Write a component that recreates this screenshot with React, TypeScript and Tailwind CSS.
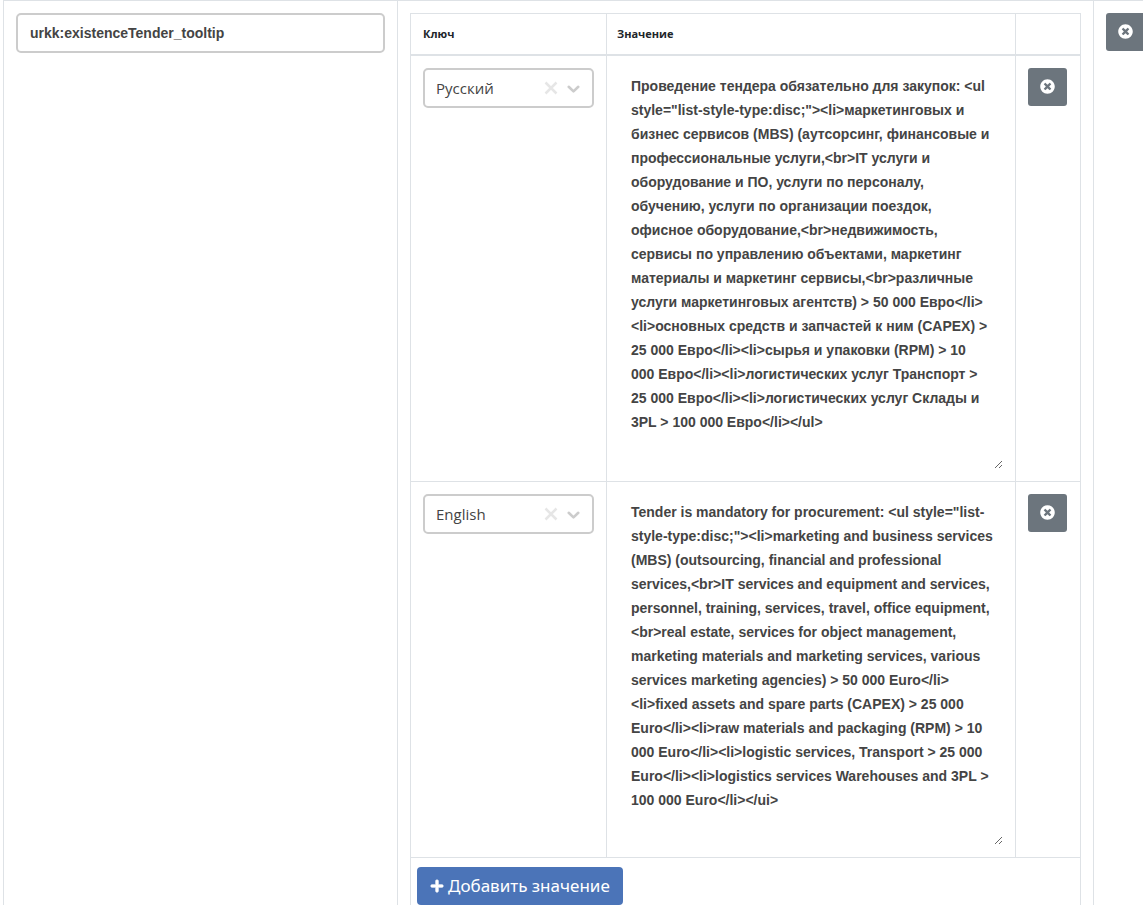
import { useState } from 'react';
import { FaPlus, FaTimesCircle } from 'react-icons/fa';

type Translation = { id: string; lang: string; text: string; size: string };

const translations: Translation[] = [
  {
    id: 'ru',
    lang: 'Русский',
    size: 'h-[401px]',
    text: 'Проведение тендера обязательно для закупок: <ul style="list-style-type:disc;"><li>маркетинговых и бизнес сервисов (MBS) (аутсорсинг, финансовые и профессиональные услуги,<br>IT услуги и оборудование и ПО, услуги по персоналу, обучению, услуги по организации поездок, офисное оборудование,<br>недвижимость, сервисы по управлению объектами, маркетинг материалы и маркетинг сервисы,<br>различные услуги маркетинговых агентств) > 50 000 Евро</li><li>основных средств и запчастей к ним (CAPEX) > 25 000 Евро</li><li>сырья и упаковки (RPM) > 10 000 Евро</li><li>логистических услуг Транспорт > 25 000 Евро</li><li>логистических услуг Склады и 3PL > 100 000 Евро</li></ul>',
  },
  {
    id: 'en',
    lang: 'English',
    size: 'h-[351px]',
    text: 'Tender is mandatory for procurement: <ul style="list-style-type:disc;"><li>marketing and business services (MBS) (outsourcing, financial and professional services,<br>IT services and equipment and services, personnel, training, services, travel, office equipment,<br>real estate, services for object management, marketing materials and marketing services, various services marketing agencies) > 50 000 Euro</li><li>fixed assets and spare parts (CAPEX) > 25 000 Euro</li><li>raw materials and packaging (RPM) > 10 000 Euro</li><li>logistic services, Transport > 25 000 Euro</li><li>logistics services Warehouses and 3PL > 100 000 Euro</li></ui>',
  },
];

function RemoveButton({ label }: { label: string }) {
  return (
    <button
      type="button"
      aria-label={label}
      className="flex h-[38px] w-[39px] items-center justify-center rounded-[3px] bg-[#6c757d] pb-[2px] text-white"
    >
      <FaTimesCircle size={15} />
    </button>
  );
}

function LanguageSelect({ id, initial }: { id: string; initial: string }) {
  const [value, setValue] = useState(initial);
  return (
    <div className="relative h-10">
      <select
        id={id}
        aria-label="Ключ"
        value={value}
        onChange={(e) => setValue(e.target.value)}
        className="h-full w-full appearance-none rounded-[5px] border-2 border-[#cccccc] bg-white pr-14 pl-[11px] text-[15px] text-[#444444]"
      >
        <option value="" />
        <option>Русский</option>
        <option>English</option>
      </select>
      <button
        type="button"
        aria-label="Очистить"
        onClick={() => setValue('')}
        className="absolute top-3 right-[35px] h-4 w-4 text-[#e6e6e6]"
      >
        <svg viewBox="0 0 16 16" className="h-4 w-4" fill="none" stroke="currentColor" strokeWidth="2.5">
          <path d="M2.5 2.5l11 11M13.5 2.5l-11 11" />
        </svg>
      </button>
      <svg
        viewBox="0 0 16 16"
        className="pointer-events-none absolute top-3 right-3 h-4 w-4 text-[#cccccc]"
        fill="none"
        stroke="currentColor"
        strokeWidth="2.6"
        strokeLinecap="round"
        strokeLinejoin="round"
      >
        <path d="M2.7 6.8l4.8 4.6L12.3 6.8" />
      </svg>
    </div>
  );
}

function ValuesTable() {
  return (
    <table className="w-full table-fixed border-separate border-spacing-0 border-t border-r border-[#dee2e6]">
      <colgroup>
        <col className="w-[196px]" />
        <col />
        <col className="w-[65px]" />
      </colgroup>
      <thead>
        <tr className="text-left text-[11px] leading-4 text-[#212529]">
          <th className="h-[42px] border-b-2 border-l border-[#dee2e6] px-3 font-bold">Ключ</th>
          <th className="border-b-2 border-l border-[#dee2e6] px-[10px] font-bold">Значение</th>
          <th className="border-b-2 border-l border-[#dee2e6]" aria-label="Действия" />
        </tr>
      </thead>
      <tbody>
        {translations.map((t) => (
          <tr key={t.id} className="align-top">
            <td className="border-b border-l border-[#dee2e6] p-3">
              <LanguageSelect id={`lang-${t.id}`} initial={t.lang} />
            </td>
            <td className="border-b border-l border-[#dee2e6] p-3">
              <textarea
                aria-label="Значение"
                defaultValue={t.text}
                spellCheck={false}
                className={`block w-full resize overflow-hidden bg-white py-[6px] pr-[10px] pl-3 font-['Liberation_Sans',Arial,sans-serif] text-sm leading-6 font-bold text-[#444444] ${t.size}`}
              />
            </td>
            <td className="border-b border-l border-[#dee2e6] p-3">
              <RemoveButton label="Удалить значение" />
            </td>
          </tr>
        ))}
        <tr>
          <td colSpan={3} className="border-l border-[#dee2e6] pt-[9px] pl-[6px]">
            <button
              type="button"
              className="flex h-[38px] items-center gap-1 rounded-[4px] bg-[#4b74b8] px-[13px] font-['Noto_Sans','Open_Sans',sans-serif] text-[17px] text-white"
            >
              <FaPlus size={14} stroke="currentColor" strokeWidth={24} />
              Добавить значение
            </button>
          </td>
        </tr>
      </tbody>
    </table>
  );
}

export default function App() {
  return (
    <main className="overflow-hidden bg-white pl-[3px] font-['Open_Sans','Noto_Sans',sans-serif]">
      <table className="w-full table-fixed border-separate border-spacing-0">
        <colgroup>
          <col className="w-[394px]" />
          <col />
          <col className="w-[50px]" />
        </colgroup>
        <tbody>
          <tr className="align-top">
            <td className="border-t border-l border-[#dee2e6] px-3 pt-3">
              <input
                type="text"
                aria-label="Ключ перевода"
                defaultValue="urkk:existenceTender_tooltip"
                className="block h-10 w-full rounded-[5px] border-2 border-[#cccccc] px-3 font-['Liberation_Sans',Arial,sans-serif] text-sm font-bold text-[#444444]"
              />
            </td>
            <td className="border-t border-l border-[#dee2e6] px-3 pt-3">
              <ValuesTable />
            </td>
            <td className="border-t border-l border-[#dee2e6] pt-3 pl-3">
              <RemoveButton label="Удалить ключ" />
            </td>
          </tr>
        </tbody>
      </table>
    </main>
  );
}
